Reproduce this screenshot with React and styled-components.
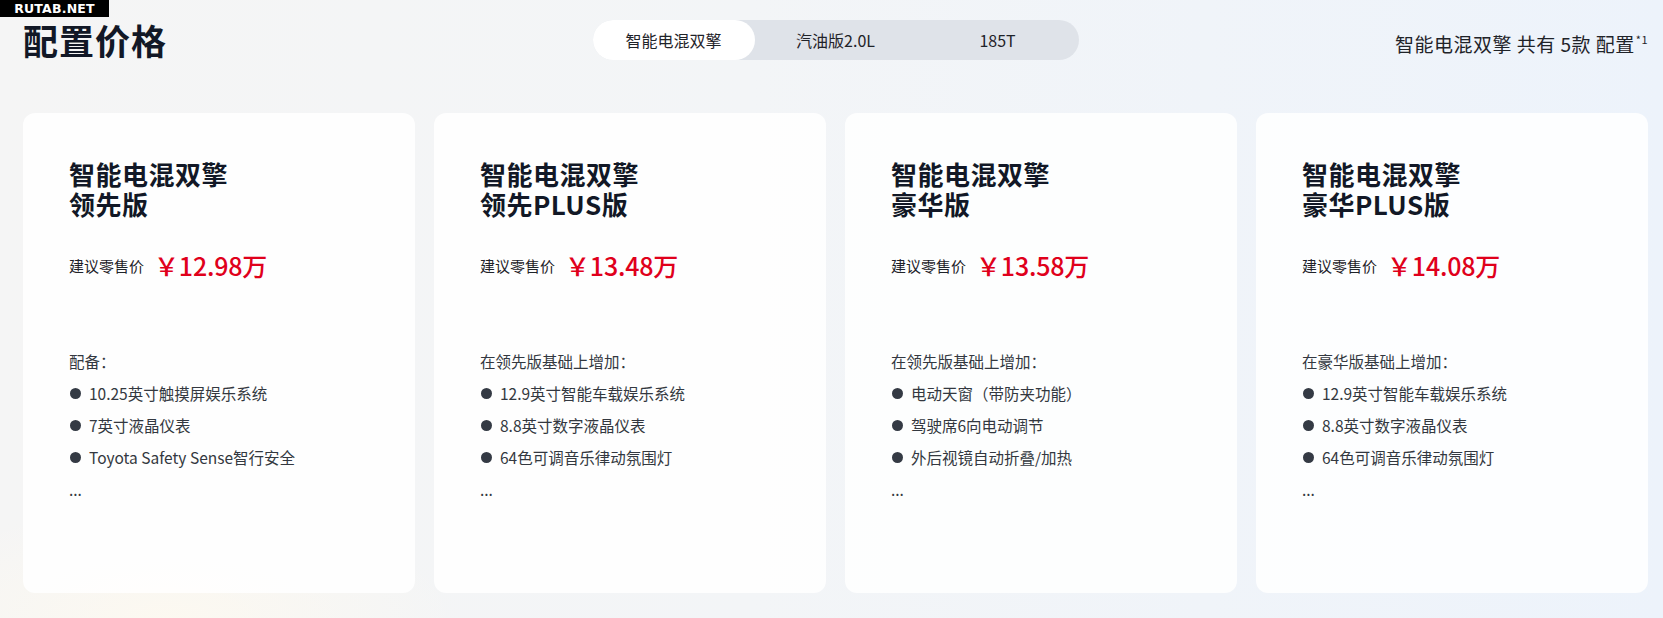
import React from "react";
import styled, { createGlobalStyle } from "styled-components";

const GlobalStyle = createGlobalStyle`
  html, body {
    margin: 0;
    padding: 0;
  }
  body {
    font-family: "Noto Sans CJK SC", "Noto Sans", sans-serif;
    color: #1f2329;
  }
`;

const tabs = ["智能电混双擎", "汽油版2.0L", "185T"];

const models = [
  {
    name: ["智能电混双擎", "领先版"],
    price: "12.98",
    intro: "配备：",
    items: ["10.25英寸触摸屏娱乐系统", "7英寸液晶仪表", "Toyota Safety Sense智行安全"],
  },
  {
    name: ["智能电混双擎", "领先PLUS版"],
    price: "13.48",
    intro: "在领先版基础上增加：",
    items: ["12.9英寸智能车载娱乐系统", "8.8英寸数字液晶仪表", "64色可调音乐律动氛围灯"],
  },
  {
    name: ["智能电混双擎", "豪华版"],
    price: "13.58",
    intro: "在领先版基础上增加：",
    items: ["电动天窗（带防夹功能）", "驾驶席6向电动调节", "外后视镜自动折叠/加热"],
  },
  {
    name: ["智能电混双擎", "豪华PLUS版"],
    price: "14.08",
    intro: "在豪华版基础上增加：",
    items: ["12.9英寸智能车载娱乐系统", "8.8英寸数字液晶仪表", "64色可调音乐律动氛围灯"],
  },
];

export default function App() {
  const active = 0;

  return (
    <Page>
      <GlobalStyle />
      <Watermark>RUTAB.NET</Watermark>

      <Header>
        <Title>配置价格</Title>
        <Segmented>
          {tabs.map((t, i) => (
            <Segment key={t} $active={i === active}>
              {t}
            </Segment>
          ))}
        </Segmented>
        <Summary>
          智能电混双擎 共有 5款 配置<sup>*1</sup>
        </Summary>
      </Header>

      <Cards>
        {models.map((m, index) => (
          <Card key={index}>
            <CardTitle>
              <div>{m.name[0]}</div>
              <div>{m.name[1]}</div>
            </CardTitle>

            <PriceRow>
              <PriceLabel>建议零售价</PriceLabel>
              <Price>￥{m.price}万</Price>
            </PriceRow>

            <Features>
              <FeatureLine>{m.intro}</FeatureLine>
              {m.items.map((item) => (
                <FeatureItem key={item}>
                  <Dot />
                  {item}
                </FeatureItem>
              ))}
              <FeatureLine>...</FeatureLine>
            </Features>
          </Card>
        ))}
      </Cards>
    </Page>
  );
}

const Page = styled.div`
  position: relative;
  width: 1663px;
  height: 618px;
  overflow: hidden;
  box-sizing: border-box;
  padding: 18px 15px 0 23px;
  background:
    radial-gradient(ellipse 420px 160px at 10% 100%, rgba(253, 249, 240, 0.9), rgba(253, 249, 240, 0) 70%),
    linear-gradient(90deg, #f5f5f5 0%, #f3f5f7 45%, #edf3fb 100%);
`;

const Watermark = styled.div`
  position: absolute;
  top: 0;
  left: 0;
  width: 109px;
  height: 17px;
  background: #000;
  color: #fff;
  font-family: "DejaVu Sans", "Liberation Sans", sans-serif;
  font-weight: bold;
  font-size: 12.5px;
  line-height: 17px;
  text-align: center;
  letter-spacing: 0.2px;
`;

const Header = styled.header`
  display: grid;
  grid-template-columns: 1fr auto 1fr;
  align-items: center;
  height: 44px;
`;

const Title = styled.h1`
  margin: 0;
  font-size: 35px;
  line-height: 40px;
  font-weight: 700;
  color: #121826;
  letter-spacing: 1px;
`;

const Segmented = styled.div`
  display: flex;
  width: 486px;
  height: 40px;
  border-radius: 20px;
  background: #dfe3e9;
`;

const Segment = styled.div`
  flex: 1;
  display: flex;
  align-items: center;
  justify-content: center;
  border-radius: 20px;
  font-size: 16px;
  color: #1f2329;
  background: ${(p) => (p.$active ? "#ffffff" : "transparent")};
`;

const Summary = styled.div`
  justify-self: end;
  margin-top: 6px;
  font-size: 19px;
  color: #1f2329;
  letter-spacing: 0.5px;

  sup {
    font-size: 11px;
    margin-left: 1px;
    vertical-align: 8px;
    line-height: 0;
  }
`;

const Cards = styled.div`
  display: grid;
  grid-template-columns: repeat(4, 392px);
  gap: 19px;
  margin-top: 51px;
`;

const Card = styled.div`
  height: 480px;
  box-sizing: border-box;
  padding: 46px 46px;
  border-radius: 12px;
  background: rgba(255, 255, 255, 0.85);
  display: flex;
  flex-direction: column;
`;

const CardTitle = styled.div`
  display: flex;
  flex-direction: column;
  gap: 0;
  font-size: 26px;
  line-height: 30px;
  font-weight: 700;
  color: #121826;
  letter-spacing: 0.5px;
`;

const PriceRow = styled.div`
  display: flex;
  align-items: center;
  gap: 10px;
  margin-top: 29px;
  height: 34px;
`;

const PriceLabel = styled.span`
  font-size: 15px;
  color: #1f2329;
`;

const Price = styled.span`
  font-size: 25px;
  font-weight: 500;
  color: #e0001b;
  letter-spacing: -0.2px;
`;

const Features = styled.div`
  margin-top: 63px;
  display: flex;
  flex-direction: column;
`;

const FeatureLine = styled.div`
  font-size: 15.5px;
  line-height: 32px;
  color: #333840;
`;

const FeatureItem = styled(FeatureLine)`
  display: flex;
  align-items: center;
`;

const Dot = styled.span`
  width: 11px;
  height: 11px;
  margin: 0 8px 0 1px;
  border-radius: 50%;
  background: #343a44;
  flex-shrink: 0;
`;
